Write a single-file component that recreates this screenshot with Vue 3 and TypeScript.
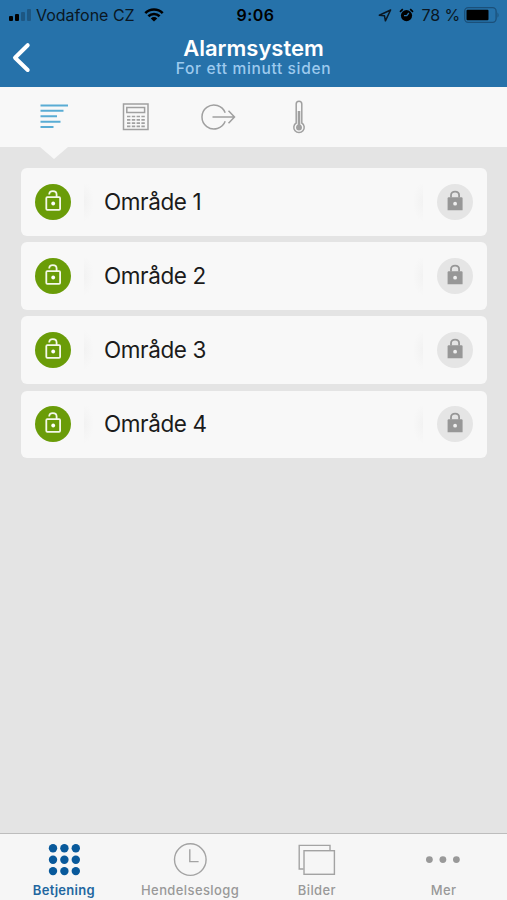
<script setup lang="ts">
interface Area {
  id: number
  name: string
}

type NavIcon = 'grid' | 'clock' | 'pictures' | 'more'

interface NavItem {
  label: string
  icon: NavIcon
  active: boolean
}

const areas: Area[] = [1, 2, 3, 4].map((id) => ({ id, name: `Område ${id}` }))

const navItems: NavItem[] = [
  { label: 'Betjening', icon: 'grid', active: true },
  { label: 'Hendelseslogg', icon: 'clock', active: false },
  { label: 'Bilder', icon: 'pictures', active: false },
  { label: 'Mer', icon: 'more', active: false },
]

const dots = [0, 1, 2]
</script>

<template>
  <div class="screen">
    <header class="header">
      <div class="status">
        <div class="status-left">
          <svg class="signal" width="23" height="12" viewBox="0 0 23 12">
            <rect x="0" y="7" width="4" height="5" rx="1" />
            <rect x="6" y="5" width="4" height="7" rx="1" />
            <rect class="faint" x="12" y="3" width="4" height="9" rx="1" />
            <rect class="faint" x="18" y="0" width="4" height="12" rx="1" />
          </svg>
          <span class="carrier">Vodafone CZ</span>
          <svg class="wifi" width="20" height="14" viewBox="0 0 20 14">
            <path d="M1.3 5.1 A12.4 12.4 0 0 1 18.7 5.1" />
            <path d="M4.4 8.3 A8 8 0 0 1 15.6 8.3" />
            <path class="core" d="M6.8 10.4 A4.6 4.6 0 0 1 13.2 10.4 L10 13.6 Z" />
          </svg>
        </div>
        <span class="time">9:06</span>
        <div class="status-right">
          <svg width="14" height="13" viewBox="0 0 14 13">
            <path class="location" d="M12.6 1 L1.3 6.2 L6.5 6.8 L7.4 11.8 Z" />
          </svg>
          <svg class="alarm" width="15" height="14" viewBox="0 0 15 14">
            <circle cx="7.5" cy="7.6" r="5.6" />
            <path class="bell" d="M1 3.8 L3.8 1.2 M14 3.8 L11.2 1.2" />
            <path class="hands" d="M5 7.6 H7.8 L9.8 5" />
          </svg>
          <span class="percent">78 %</span>
          <svg class="battery" width="37" height="16" viewBox="0 0 37 16">
            <rect class="shell" x="0.7" y="0.7" width="31.4" height="14.6" rx="3.5" />
            <rect x="2.5" y="2.7" width="22" height="10.6" rx="1" />
            <path class="faint" d="M33.4 5.2 Q36 8 33.4 10.8 Z" />
          </svg>
        </div>
      </div>
      <div class="title-row">
        <svg class="back" width="18" height="30" viewBox="0 0 18 30">
          <path d="M15.7 2.2 L3 14.7 L15.7 27" />
        </svg>
        <div class="titles">
          <h1>Alarmsystem</h1>
          <p>For ett minutt siden</p>
        </div>
        <span class="back-balance"></span>
      </div>
    </header>

    <nav class="tabs">
      <button class="tab active" aria-label="Områder">
        <svg width="28" height="26" viewBox="0 0 28 26">
          <path d="M0.5 1.5 H28 M0.5 6.8 H23.5 M0.5 12.2 H17 M0.5 17.7 H20.5 M0.5 23 H13.5" />
        </svg>
      </button>
      <button class="tab" aria-label="Tastatur">
        <svg width="28" height="28" viewBox="0 0 28 28">
          <rect x="1.5" y="1" width="24.5" height="25.5" />
          <rect x="4.8" y="4.5" width="17.8" height="5" />
          <path class="keys" d="M5 13.5 H23 M5 16.8 H23 M5 20.1 H23 M5 23.4 H23" />
        </svg>
      </button>
      <button class="tab" aria-label="Utganger">
        <svg width="36" height="28" viewBox="0 0 36 28">
          <path d="M25.2 9.8 A12 12 0 1 0 25.2 18.3 M12.5 14 H34 M28.5 7.8 L34.5 14 L28.5 20.3" />
        </svg>
      </button>
      <button class="tab" aria-label="Temperatur">
        <svg width="14" height="34" viewBox="0 0 14 34">
          <path d="M4.2 23 V4 A2.8 2.8 0 0 1 9.8 4 V23 A5.2 5.2 0 1 1 4.2 23 Z" />
          <path class="mercury" d="M7 11 V26" />
          <circle class="bulb" cx="7" cy="27.5" r="2.2" />
        </svg>
      </button>
    </nav>

    <main class="areas">
      <section v-for="area in areas" :key="area.id" class="card">
        <span class="badge open">
          <svg width="18" height="22" viewBox="0 0 18 22">
            <rect x="2.3" y="8.2" width="13.8" height="12.6" rx="1" />
            <path d="M5.2 5.4 C5.2 1 12.6 0.8 12.6 5.6 V8" />
            <circle class="hole" cx="9.2" cy="14.5" r="1.9" />
          </svg>
        </span>
        <span class="divider"></span>
        <span class="name">{{ area.name }}</span>
        <span class="divider end"></span>
        <span class="badge locked">
          <svg width="18" height="22" viewBox="0 0 18 22">
            <path class="body" d="M2.7 8.3 H15.5 Q16.6 8.3 16.6 9.4 V21.3 H1.6 V9.4 Q1.6 8.3 2.7 8.3 Z" />
            <path d="M5 8.6 V6.3 C5 1.3 13.1 1.3 13.1 6.3 V8.6" />
            <circle class="hole" cx="9.1" cy="14.7" r="1.9" />
          </svg>
        </span>
      </section>
    </main>

    <footer class="bottom">
      <div v-for="item in navItems" :key="item.label" class="nav-item" :class="{ active: item.active }">
        <svg width="40" height="36" viewBox="0 0 40 36">
          <g v-if="item.icon === 'grid'" class="solid">
            <template v-for="row in dots" :key="row">
              <circle v-for="col in dots" :key="col" :cx="9 + col * 11.4" :cy="6.3 + row * 11.4" r="4.2" />
            </template>
          </g>
          <g v-else-if="item.icon === 'clock'">
            <circle cx="20.3" cy="17.6" r="15.8" />
            <path d="M19.8 7.2 V19.6 H28.6" />
          </g>
          <g v-else-if="item.icon === 'pictures'">
            <path d="M6.6 27 H2.2 V3.4 H33 V8.7" />
            <rect x="7" y="8.7" width="30.4" height="23.6" />
          </g>
          <g v-else class="solid">
            <circle v-for="dot in dots" :key="dot" :cx="5.4 + dot * 13.5" cy="17.6" r="3.4" />
          </g>
        </svg>
        <span class="nav-label">{{ item.label }}</span>
      </div>
    </footer>
  </div>
</template>

<style>
body {
  margin: 0;
}
</style>

<style scoped>
.screen {
  box-sizing: border-box;
  width: 507px;
  height: 900px;
  display: flex;
  flex-direction: column;
  overflow: hidden;
  background: #e4e4e4;
  font-family: Inter, "Liberation Sans", sans-serif;
}

svg {
  display: block;
  flex: none;
  overflow: visible;
}

.header {
  flex: none;
  height: 87px;
  background: #2672aa;
  color: #fff;
}

.status {
  height: 30px;
  display: grid;
  grid-template-columns: 1fr auto 1fr;
  align-items: center;
  padding: 0 6px 0 9px;
  color: #0a1722;
  font-size: 16px;
}

.status-left,
.status-right {
  display: flex;
  align-items: center;
}

.status-right {
  justify-content: flex-end;
}

.carrier {
  margin: 0 9px 0 4px;
}

.faint {
  fill: #1a4b72;
  opacity: 0.7;
}

.wifi {
  fill: none;
  stroke: #000;
  stroke-width: 2.6;
}

.wifi .core {
  fill: #000;
  stroke: none;
}

.time {
  padding-left: 1px;
  color: #000;
  font-weight: 600;
  letter-spacing: 0.5px;
}

.location {
  fill: none;
  stroke: #0a1722;
  stroke-width: 1.5;
  stroke-linejoin: round;
}

.alarm {
  margin-left: 7px;
}

.bell {
  stroke: #000;
  stroke-width: 1.7;
}

.hands {
  fill: none;
  stroke: #2672aa;
  stroke-width: 1.3;
}

.percent {
  margin: 0 4px 0 7px;
  letter-spacing: -0.1px;
}

.shell {
  fill: none;
  stroke: #1b507a;
  stroke-width: 1.3;
}

.title-row {
  height: 57px;
  display: flex;
  align-items: center;
  padding: 0 12px;
}

.back {
  margin-bottom: 1px;
  fill: none;
  stroke: #fff;
  stroke-width: 4;
  stroke-linecap: round;
  stroke-linejoin: round;
}

.titles {
  flex: 1;
  text-align: center;
}

.back-balance {
  width: 18px;
}

h1 {
  margin: 1px 0 0;
  font-size: 22px;
  line-height: 24px;
  font-weight: 600;
}

p {
  margin: 0 0 5px;
  color: #9dcaee;
  font-size: 15.5px;
  line-height: 18px;
  font-weight: 500;
  letter-spacing: 0.65px;
}

.tabs {
  flex: none;
  height: 60px;
  display: flex;
  padding-left: 13px;
  background: #f8f8f8;
}

.tab {
  position: relative;
  width: 81.6px;
  padding: 0;
  border: 0;
  display: flex;
  align-items: center;
  justify-content: center;
  background: none;
}

.tab:nth-child(2) {
  padding-left: 2px;
}

.tab:nth-child(3) {
  padding-left: 3px;
}

.tab svg {
  fill: none;
  stroke: #a0a0a0;
  stroke-width: 1.5;
}

.tab.active svg {
  stroke: #59acd4;
  stroke-width: 2;
}

.tab.active::after {
  content: "";
  position: absolute;
  top: 100%;
  left: 50%;
  margin-left: -14px;
  border: 14px solid transparent;
  border-top: 12px solid #f8f8f8;
  border-bottom: 0;
}

.tab .keys {
  stroke-width: 1.7;
  stroke-dasharray: 3.4 1.4;
}

.tab .mercury {
  stroke-width: 2.6;
}

.tab .bulb {
  fill: #a0a0a0;
}

.areas {
  flex: 1;
  display: flex;
  flex-direction: column;
  gap: 6.7px;
  padding: 21px 20px 0 21px;
}

.card {
  box-sizing: border-box;
  height: 67.5px;
  display: flex;
  align-items: center;
  padding: 0 14px;
  border-radius: 6px;
  background: #f8f8f8;
}

.badge {
  width: 36px;
  height: 36px;
  border-radius: 50%;
  display: flex;
  align-items: center;
  justify-content: center;
}

.badge svg {
  margin-bottom: 4px;
  fill: none;
  stroke-width: 1.8;
}

.open {
  background: #6a9c08;
}

.open svg {
  stroke: #f4f8ea;
}

.open .hole {
  fill: #fff;
  stroke: none;
}

.locked {
  background: #e5e5e5;
}

.locked svg {
  stroke: #979797;
}

.locked .body {
  fill: #979797;
  stroke: none;
}

.locked .hole {
  fill: #efefef;
  stroke: none;
}

.divider {
  width: 10px;
  height: 40px;
  margin-left: 13px;
  background: radial-gradient(ellipse at left, #f2f2f2, #f8f8f8 70%);
}

.divider.end {
  margin: 0 14px 0 0;
  background: radial-gradient(ellipse at right, #f2f2f2, #f8f8f8 70%);
}

.name {
  flex: 1;
  padding-left: 10px;
  color: #1b1b1b;
  font-size: 22.5px;
  line-height: 28px;
  letter-spacing: -0.4px;
}

.bottom {
  flex: none;
  box-sizing: border-box;
  height: 67px;
  display: grid;
  grid-template-columns: repeat(4, 1fr);
  border-top: 1px solid #bdbdbd;
  background: #f6f6f6;
}

.nav-item {
  display: flex;
  flex-direction: column;
  align-items: center;
  padding-top: 8px;
  color: #999;
}

.nav-item svg {
  fill: none;
  stroke: #a3a3a3;
  stroke-width: 1.4;
}

.nav-item .solid {
  fill: #999;
  stroke: none;
}

.nav-item.active {
  padding-left: 1px;
  color: #22669f;
}

.nav-item.active .solid {
  fill: #08599b;
}

.nav-label {
  margin-top: 4px;
  font-size: 13px;
  line-height: 16px;
  font-weight: 500;
  letter-spacing: 0.4px;
}

.active .nav-label {
  font-weight: 600;
  letter-spacing: 0.3px;
}
</style>
